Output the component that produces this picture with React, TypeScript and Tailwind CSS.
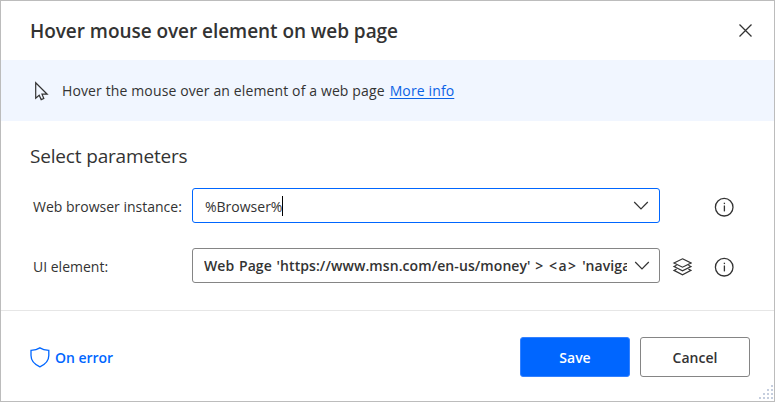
import React from "react";

function Chevron() {
  return (
    <svg className="h-[9px] w-4 shrink-0" viewBox="0 0 16 9" fill="none" stroke="#333" strokeWidth="1.2">
      <path d="M1.2 1L8 8L14.8 1" />
    </svg>
  );
}

function InfoIcon() {
  return (
    <svg className="h-5 w-5 shrink-0" viewBox="0 0 20 20" fill="none" stroke="#333" strokeWidth="1.3">
      <circle cx="10.2" cy="10.2" r="8.8" />
      <path d="M10.4 8.5V14.4" />
      <path d="M10.4 5.7V7.1" />
    </svg>
  );
}

function LayersIcon() {
  return (
    <svg className="h-[18px] w-5 shrink-0" viewBox="0 0 20 18" fill="none" stroke="#333" strokeWidth="1.2">
      <path d="M10.5 .8L19 5L10.5 9.2L2 5Z" />
      <path d="M4.6 7.2L2 8.6L10.5 12.9L19 8.6L16.4 7.2" />
      <path d="M4.6 10.9L2 12.4L10.5 16.8L19 12.4L16.4 10.9" />
    </svg>
  );
}

function ResizeGrip() {
  const dots = [[12, 0], [8, 4], [12, 4], [4, 8], [8, 8], [12, 8], [0, 12], [4, 12], [8, 12], [12, 12]];
  return (
    <svg className="absolute right-px bottom-0.5 h-[14px] w-[14px]" viewBox="0 0 14 14" fill="#c5cede">
      {dots.map(([x, y]) => (
        <rect key={`${x}-${y}`} x={x} y={y} width="2" height="2" />
      ))}
    </svg>
  );
}

export default function App() {
  return (
    <div className="relative flex h-[402px] w-[775px] flex-col overflow-hidden border border-[#bcbcbc] bg-white font-['Open_Sans','Noto_Sans',sans-serif] text-[14px] leading-5 whitespace-nowrap text-[#333]">
      <header className="flex h-[59px] items-center justify-between pr-[22px] pl-[29px]">
        <h1 className="text-[19px] leading-6 font-semibold tracking-[-0.05px]">Hover mouse over element on web page</h1>
        <svg className="h-[13px] w-[13px]" viewBox="0 0 13 13" stroke="#333" strokeWidth="1.3">
          <path d="M.5 .5L12.5 12.5M12.5 .5L.5 12.5" />
        </svg>
      </header>
      <section className="flex h-[61px] items-center bg-[#f1f6ff] pl-[33px]">
        <svg className="h-[21px] w-[15px]" viewBox="0 0 15 21" fill="none" stroke="#333" strokeWidth="1.2">
          <path d="M1.7 2.8V18.2L5.2 15.3L7.2 19.6L9.8 18.5L8 14.2H13.2Z" />
        </svg>
        <p className="ml-[13px] tracking-[0.125px]">Hover the mouse over an element of a web page</p>
        <a className="ml-[5px] tracking-[0.13px] text-[#0b62e6] underline underline-offset-2">More info</a>
      </section>
      <main className="flex h-[189px] flex-col pl-[29px]">
        <h2 className="mt-[23px] text-[19px] leading-6 tracking-[-0.17px]">Select parameters</h2>
        <div className="mt-5 flex h-[35px] items-center">
          <label className="w-[162px] pt-0.5 pl-[3px]">Web browser instance:</label>
          <div className="flex h-[35px] w-[468px] items-center justify-between rounded-[3px] border border-[#0066ff] pr-[10px] pl-[12px]">
            <div className="flex items-center">
              <span className="pt-0.5">%Browser%</span>
              <span className="h-5 w-px bg-black" />
            </div>
            <Chevron />
          </div>
          <div className="mt-[3px] ml-[54px]"><InfoIcon /></div>
        </div>
        <div className="mt-[25px] flex h-[35px] items-center">
          <label className="w-[162px] pt-0.5 pl-[3px]">UI element:</label>
          <div className="flex h-[35px] w-[468px] items-center justify-between rounded-[3px] border border-[#858585] pr-[9px] pl-[11px]">
            <span className="w-[423px] overflow-hidden font-semibold tracking-[0.08px] [word-spacing:1px]">
              Web Page 'https://www.msn.com/en-us/money' &gt; <span className="ml-px tracking-[1.4px]">&lt;a&gt;</span> 'naviga
            </span>
            <Chevron />
          </div>
          <div className="mt-[3px] ml-3"><LayersIcon /></div>
          <div className="mt-[3px] ml-[22px]"><InfoIcon /></div>
        </div>
      </main>
      <footer className="flex h-[91px] items-center border-t border-[#e6e6e6] pt-0.5 pr-6 pl-[29px]">
        <button className="flex items-center text-[#0066ff]">
          <svg className="h-[21px] w-5" viewBox="0 0 20 21" fill="none" stroke="#0066ff" strokeWidth="1.3">
            <path d="M9.9 .9C7.5 2.5 4.3 3.2 1 3.3V8.5C1 14 5 17.6 9.9 19.8C14.8 17.6 18.8 14 18.8 8.5V3.3C15.5 3.2 12.3 2.5 9.9 .9Z" />
          </svg>
          <span className="ml-[5px] pt-0.5 font-semibold tracking-[-0.05px]">On error</span>
        </button>
        <div className="ml-auto flex gap-[10px]">
          <button className="h-10 w-[110px] rounded-[3px] border border-[#3381ff] bg-[#0066ff] pt-px font-semibold text-white">Save</button>
          <button className="h-10 w-[110px] rounded-[3px] border border-[#858585] bg-white pt-px font-semibold">Cancel</button>
        </div>
      </footer>
      <ResizeGrip />
    </div>
  );
}
